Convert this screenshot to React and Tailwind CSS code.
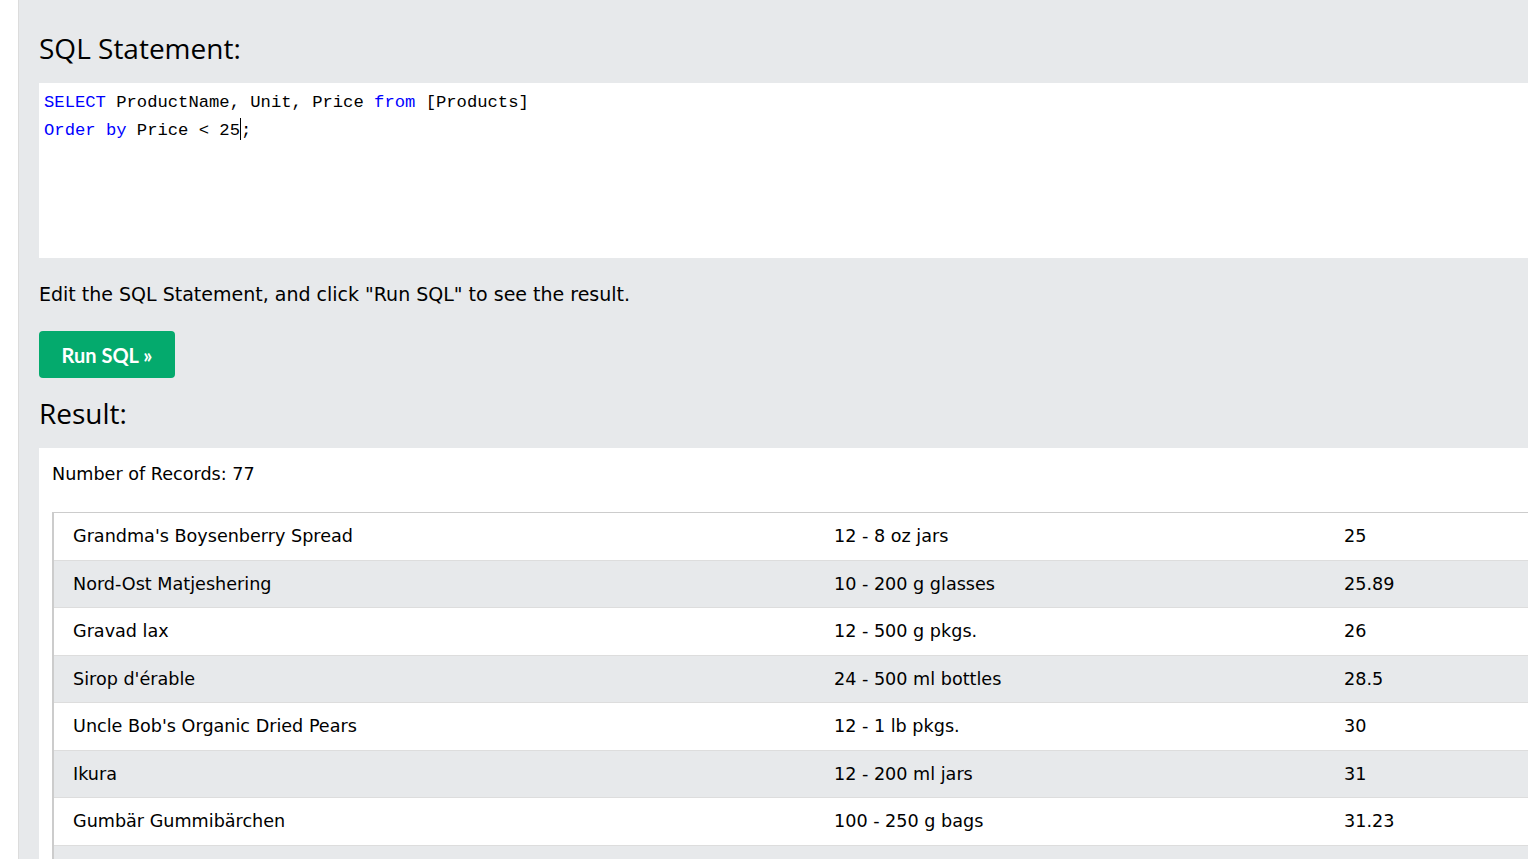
const rows = [
  ["Grandma's Boysenberry Spread", '12 - 8 oz jars', '25'],
  ['Nord-Ost Matjeshering', '10 - 200 g glasses', '25.89'],
  ['Gravad lax', '12 - 500 g pkgs.', '26'],
  ["Sirop d'érable", '24 - 500 ml bottles', '28.5'],
  ["Uncle Bob's Organic Dried Pears", '12 - 1 lb pkgs.', '30'],
  ['Ikura', '12 - 200 ml jars', '31'],
  ['Gumbär Gummibärchen', '100 - 250 g bags', '31.23'],
  ['', '', ''],
];

const heading = "text-[28px] leading-none text-black font-['Open_Sans',sans-serif]";
const body = "font-['DejaVu_Sans','Verdana',sans-serif] text-black";

export default function App() {
  return (
    <div className="flex h-[859px] overflow-hidden bg-white">
      <div className="w-[19px] shrink-0 bg-white border-r border-[#dcdcdc]" />
      <div className="flex-1 min-w-0 bg-[#e7e9eb] pl-[20px] overflow-hidden">
        <div className="pt-[34px] h-[83px]">
          <h3 className={heading}>SQL Statement:</h3>
        </div>
        <div className="h-[175px] bg-white pl-[5px] pt-[6px] font-['Liberation_Mono',monospace] text-[17.2px] leading-[28px] whitespace-pre text-[#000]">
          <div>
            <span className="text-[#0000ff]">SELECT</span> ProductName, Unit, Price <span className="text-[#0000ff]">from</span> [Products]
          </div>
          <div>
            <span className="text-[#0000ff]">Order by</span> Price &lt; 25<span className="inline-block w-px h-[22px] align-[-5px] bg-black" />;
          </div>
        </div>
        <p className={`${body} text-[19px] mt-[24px] leading-[24px]`}>
          Edit the SQL Statement, and click "Run SQL" to see the result.
        </p>
        <button className="mt-[25px] w-[136px] h-[47px] rounded-[4px] bg-[#04aa6d] text-white font-bold text-[20px] font-['Lato',sans-serif]">
          Run SQL »
        </button>
        <div className="h-[70px] pt-[21px]">
          <h3 className={heading}>Result:</h3>
        </div>
        <div className="bg-white pl-[13px] pt-[14px]">
          <div className={`${body} text-[17.6px] leading-[24px]`}>Number of Records: 77</div>
          <table className={`${body} text-[17.6px] mt-[26px] w-[1600px] border-t border-l-2 border-[#cccccc] border-collapse`}>
            <tbody>
              {rows.map((r, i) => (
                <tr key={i} className={`h-[47.5px] border-b border-[#dddddd] ${i % 2 ? 'bg-[#e7e9eb]' : 'bg-white'}`}>
                  <td className="pl-[19px] w-[781px]">{r[0]}</td>
                  <td className="w-[510px]">{r[1]}</td>
                  <td>{r[2]}</td>
                </tr>
              ))}
            </tbody>
          </table>
        </div>
      </div>
    </div>
  );
}
